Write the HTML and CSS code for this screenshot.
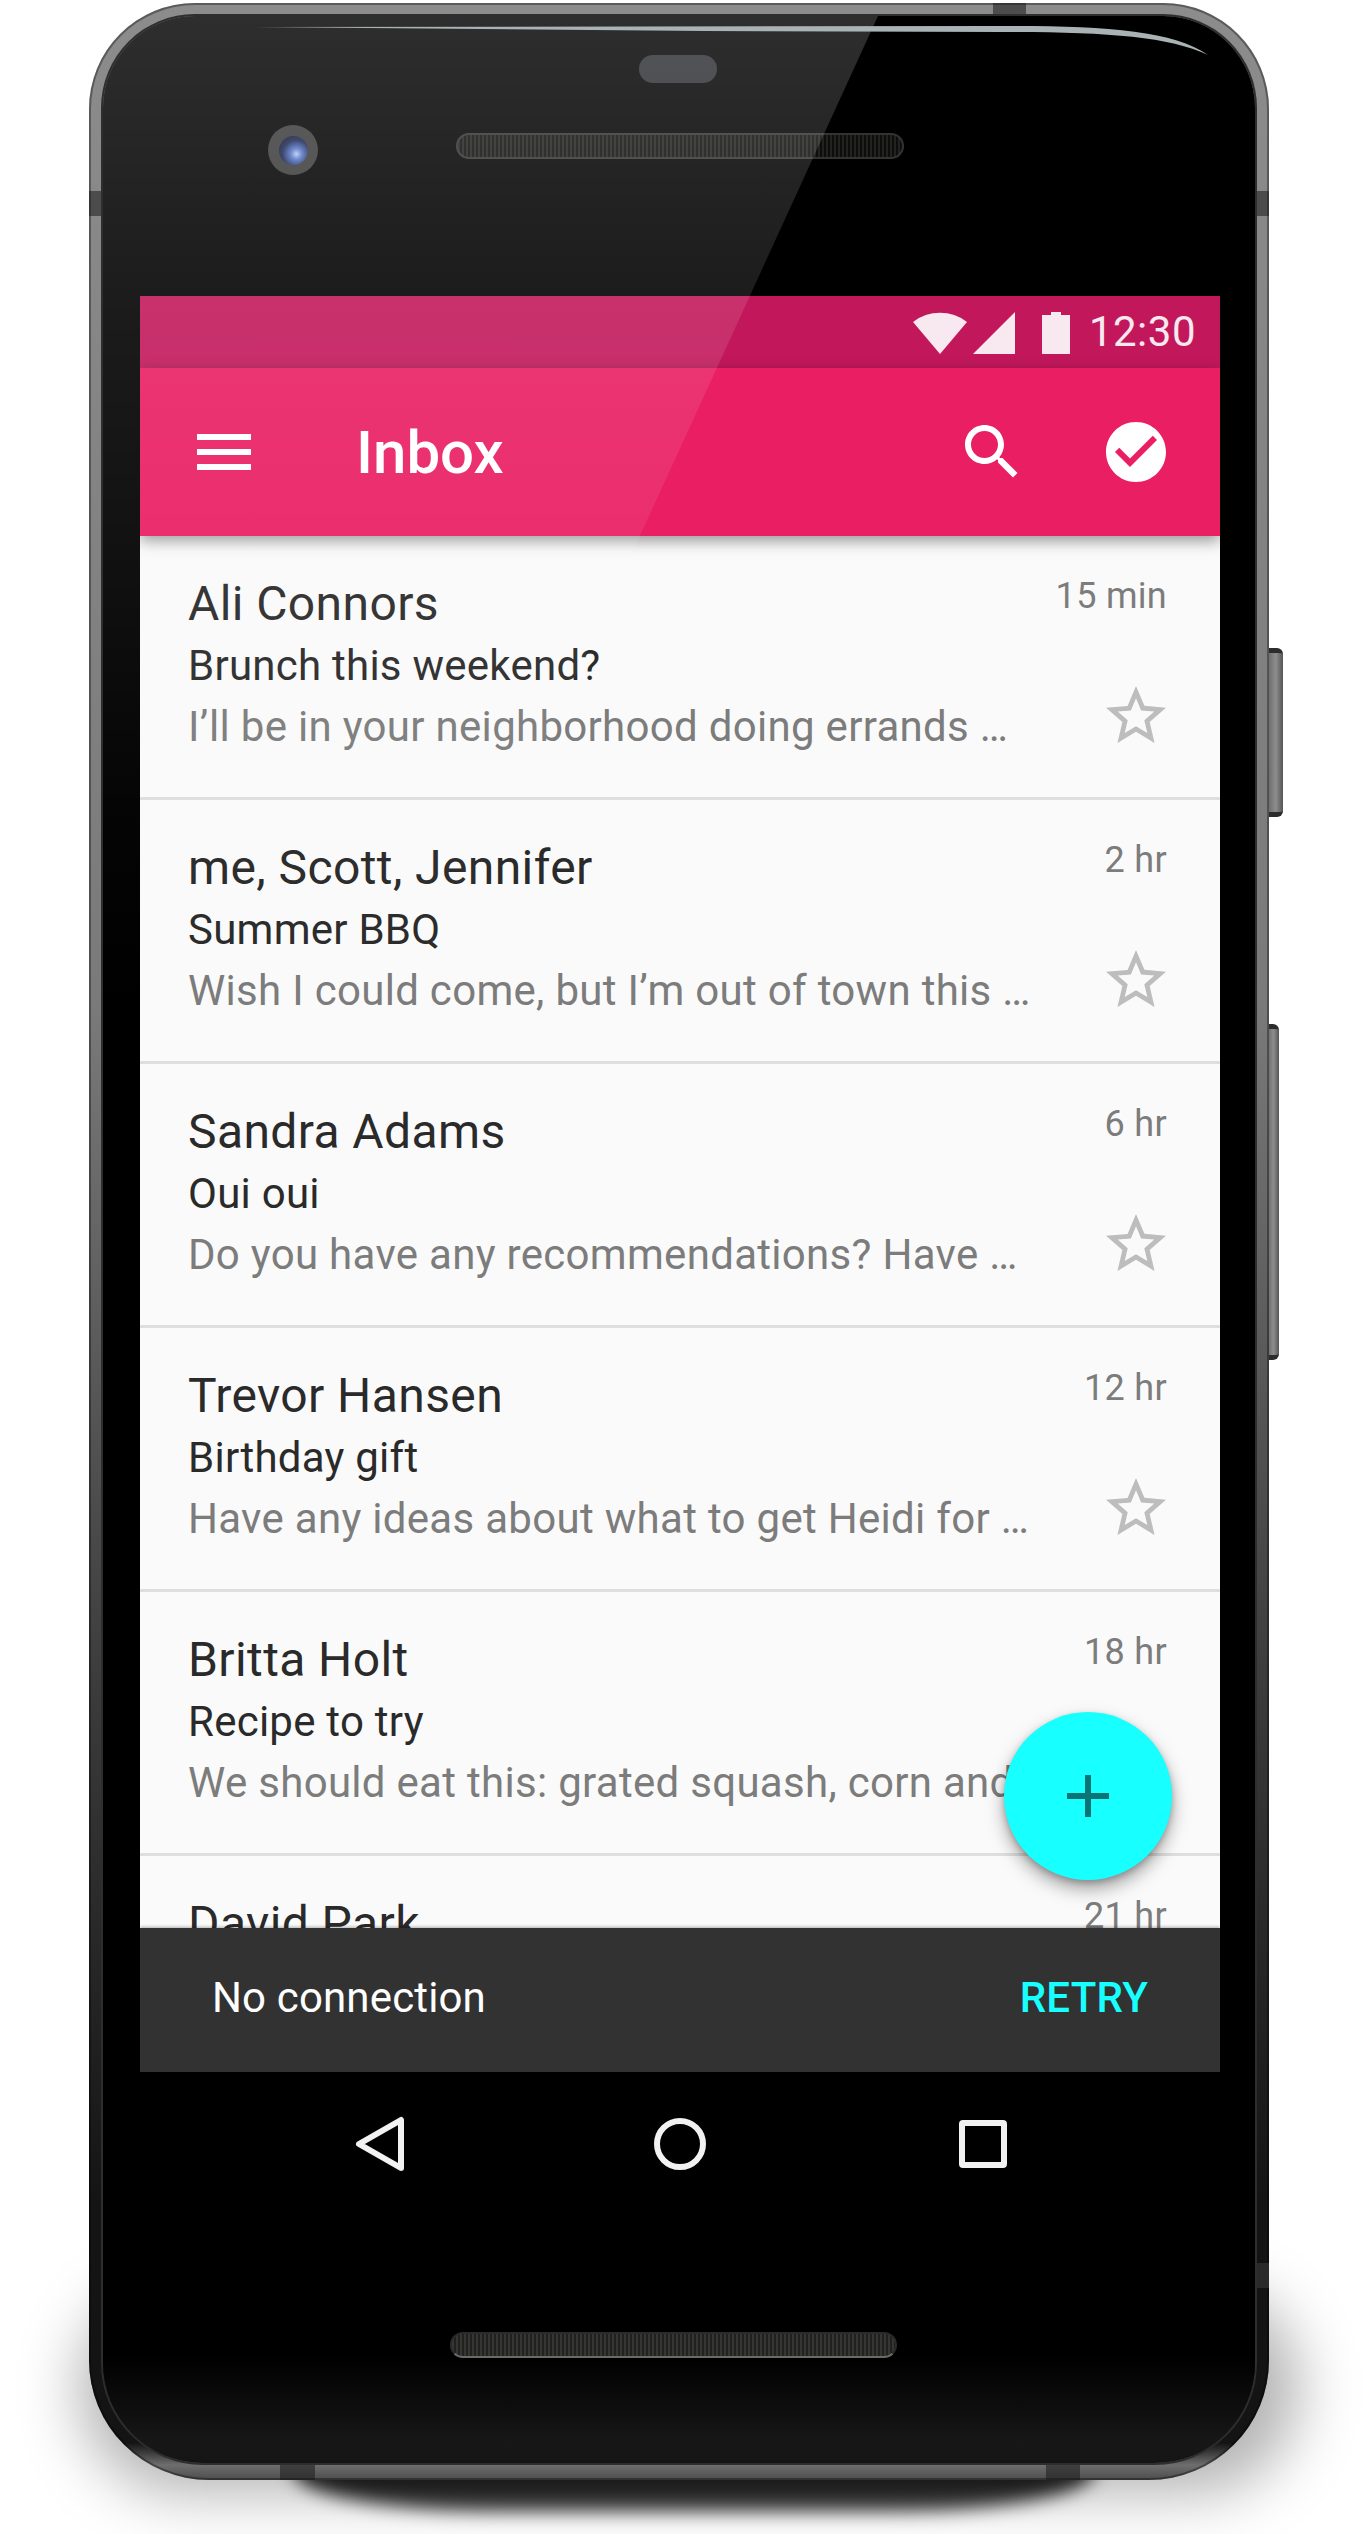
FILE: index.html
```html
<!DOCTYPE html>
<html lang="en">
<head>
  <meta charset="UTF-8">
  <meta name="viewport" content="width=device-width, initial-scale=1.0">
  <title>Inbox</title>
  <link rel="stylesheet" href="styles.css">
</head>
<body>
  <div class="device">
    <div class="floor-shadow"></div>
    <div class="floor-shadow-core"></div>
    <div class="side-btn power"></div>
    <div class="side-btn volume"></div>

    <div class="phone">
      <i class="notch notch-top"></i>
      <i class="notch notch-left"></i>
      <i class="notch notch-right"></i>
      <i class="notch notch-right-low"></i>
      <i class="notch notch-bottom-a"></i>
      <i class="notch notch-bottom-b"></i>

      <div class="bezel">
        <div class="bezel-top">
          <div class="sensor"></div>
          <div class="ear-row">
            <div class="camera"><div class="lens"></div></div>
            <div class="speaker"></div>
          </div>
        </div>

        <div class="screen">
          <div class="status-bar">
            <svg class="st-wifi" viewBox="0 0 54 42"><path d="M27 42L0 10A44 44 0 0 1 54 10Z"/></svg>
            <svg class="st-signal" viewBox="0 0 42 42"><path d="M42 0V42H0Z"/></svg>
            <svg class="st-battery" viewBox="0 0 28 42"><path d="M9 0H19V3H28V42H0V3H9Z"/></svg>
            <span class="st-time">12:30</span>
          </div>

          <div class="app-bar">
            <svg class="icon menu-icon" viewBox="0 0 24 24"><path d="M3 18h18v-2H3v2zm0-5h18v-2H3v2zm0-7v2h18V6H3z"/></svg>
            <div class="title">Inbox</div>
            <svg class="icon" viewBox="0 0 24 24"><path d="M15.5 14h-.79l-.28-.27C15.41 12.59 16 11.11 16 9.5 16 5.91 13.09 3 9.5 3S3 5.91 3 9.5 5.91 16 9.5 16c1.61 0 3.09-.59 4.23-1.57l.27.28v.79l5 4.99L20.49 19l-4.99-5zm-6 0C7.01 14 5 11.99 5 9.5S7.01 5 9.5 5 14 7.01 14 9.5 11.99 14 9.5 14z"/></svg>
            <svg class="icon check-icon" viewBox="0 0 24 24"><path d="M12 2C6.48 2 2 6.48 2 12s4.48 10 10 10 10-4.48 10-10S17.52 2 12 2zm-2 15l-5-5 1.41-1.41L10 14.17l7.59-7.59L19 8l-9 9z"/></svg>
          </div>

          <div class="list">
            <div class="row">
              <div class="row-text">
                <div class="name">Ali Connors</div>
                <div class="subject">Brunch this weekend?</div>
                <div class="preview">I’ll be in your neighborhood doing errands …</div>
              </div>
              <div class="row-side">
                <span class="time">15 min</span>
                <svg class="star" viewBox="0 0 24 24"><path d="M22 9.24l-7.19-.62L12 2 9.19 8.63 2 9.24l5.46 4.73L5.82 21 12 17.27 18.18 21l-1.63-7.03L22 9.24zM12 15.4l-3.76 2.27 1-4.28-3.32-2.88 4.38-.38L12 6.1l1.71 4.04 4.38.38-3.32 2.88 1 4.28L12 15.4z"/></svg>
              </div>
            </div>
            <div class="row">
              <div class="row-text">
                <div class="name">me, Scott, Jennifer</div>
                <div class="subject">Summer BBQ</div>
                <div class="preview">Wish I could come, but I’m out of town this …</div>
              </div>
              <div class="row-side">
                <span class="time">2 hr</span>
                <svg class="star" viewBox="0 0 24 24"><path d="M22 9.24l-7.19-.62L12 2 9.19 8.63 2 9.24l5.46 4.73L5.82 21 12 17.27 18.18 21l-1.63-7.03L22 9.24zM12 15.4l-3.76 2.27 1-4.28-3.32-2.88 4.38-.38L12 6.1l1.71 4.04 4.38.38-3.32 2.88 1 4.28L12 15.4z"/></svg>
              </div>
            </div>
            <div class="row">
              <div class="row-text">
                <div class="name">Sandra Adams</div>
                <div class="subject">Oui oui</div>
                <div class="preview">Do you have any recommendations? Have …</div>
              </div>
              <div class="row-side">
                <span class="time">6 hr</span>
                <svg class="star" viewBox="0 0 24 24"><path d="M22 9.24l-7.19-.62L12 2 9.19 8.63 2 9.24l5.46 4.73L5.82 21 12 17.27 18.18 21l-1.63-7.03L22 9.24zM12 15.4l-3.76 2.27 1-4.28-3.32-2.88 4.38-.38L12 6.1l1.71 4.04 4.38.38-3.32 2.88 1 4.28L12 15.4z"/></svg>
              </div>
            </div>
            <div class="row">
              <div class="row-text">
                <div class="name">Trevor Hansen</div>
                <div class="subject">Birthday gift</div>
                <div class="preview">Have any ideas about what to get Heidi for …</div>
              </div>
              <div class="row-side">
                <span class="time">12 hr</span>
                <svg class="star" viewBox="0 0 24 24"><path d="M22 9.24l-7.19-.62L12 2 9.19 8.63 2 9.24l5.46 4.73L5.82 21 12 17.27 18.18 21l-1.63-7.03L22 9.24zM12 15.4l-3.76 2.27 1-4.28-3.32-2.88 4.38-.38L12 6.1l1.71 4.04 4.38.38-3.32 2.88 1 4.28L12 15.4z"/></svg>
              </div>
            </div>
            <div class="row">
              <div class="row-text">
                <div class="name">Britta Holt</div>
                <div class="subject">Recipe to try</div>
                <div class="preview">We should eat this: grated squash, corn and …</div>
              </div>
              <div class="row-side">
                <span class="time">18 hr</span>
              </div>
            </div>
            <div class="row">
              <div class="row-text">
                <div class="name">David Park</div>
              </div>
              <div class="row-side">
                <span class="time">21 hr</span>
              </div>
            </div>
          </div>

          <div class="snackbar">
            <span class="snack-msg">No connection</span>
            <span class="snack-action">RETRY</span>
          </div>

          <div class="fab">
            <svg viewBox="0 0 24 24"><path d="M19 13h-6v6h-2v-6H5v-2h6V5h2v6h6v2z"/></svg>
          </div>
        </div>

        <div class="nav-bar">
          <svg viewBox="0 0 72 72"><path d="M57 12V60L15 36Z"/></svg>
          <svg viewBox="0 0 72 72"><circle cx="36" cy="36" r="23"/></svg>
          <svg viewBox="0 0 72 72"><rect x="18" y="15" width="42" height="42" rx="1"/></svg>
        </div>

        <div class="bezel-bottom">
          <div class="speaker speaker-low"></div>
        </div>

        <div class="glare"></div>
        <svg class="sheen" viewBox="0 0 1152 80"><path d="M144 11L900 10C1000 10 1070 14 1105 39C1065 20 1000 16 900 16L600 15Z"/></svg>
      </div>
    </div>
  </div>
</body>
</html>
```

FILE: styles.css
```css
html, body {
  margin: 0;
  padding: 0;
  height: 2534px;
  overflow: hidden;
  background: #fff;
}
body {
  font-family: Roboto, "Liberation Sans", sans-serif;
}
svg {
  display: block;
}

/* device hardware */
.device {
  position: relative;
  width: 1180px;
  height: 2477px;
  margin: 3px 0 0 89px;
}
.floor-shadow {
  position: absolute;
  left: -10px;
  right: -30px;
  top: 2280px;
  height: 210px;
  border-radius: 120px;
  background: rgba(0, 0, 0, 0.3);
  filter: blur(30px);
}
.floor-shadow-core {
  position: absolute;
  left: 205px;
  right: 175px;
  top: 2440px;
  height: 68px;
  border-radius: 0 0 200px 200px / 0 0 40px 40px;
  background: linear-gradient(180deg, #181818 55%, #3c3c3c 100%);
  filter: blur(9px);
}
.side-btn {
  position: absolute;
  background: linear-gradient(90deg, #666, #8d8d8d 55%, #555);
  border-radius: 0 6px 6px 0;
  border-top: 5px solid #2c2c2c;
  border-bottom: 5px solid #2c2c2c;
}
.power {
  left: 1178px;
  top: 645px;
  width: 16px;
  height: 159px;
}
.volume {
  left: 1178px;
  top: 1021px;
  width: 12px;
  height: 326px;
}
.phone {
  position: relative;
  box-sizing: border-box;
  width: 100%;
  height: 100%;
  padding: 13px 14px 17px 14px;
  border-radius: 106px 106px 120px 120px;
  background: linear-gradient(180deg, #8c8c8c 0, #7a7a7a 1000px, #3a3a3a 1700px, #141414 2200px, #141414 2440px, #6e6e6e 2462px, #4c4c4c 2477px);
  box-shadow: inset 0 0 0 2px rgba(0, 0, 0, 0.35);
}
.notch {
  position: absolute;
  background: rgba(25, 25, 25, 0.55);
}
.notch-top { left: 904px; top: 0; width: 33px; height: 13px; }
.notch-left { left: 0; top: 188px; width: 14px; height: 25px; }
.notch-right { right: 0; top: 188px; width: 14px; height: 25px; }
.notch-right-low { right: 0; top: 2260px; width: 14px; height: 25px; background: #2a2a2a; }
.notch-bottom-a { left: 191px; bottom: 0; width: 35px; height: 17px; }
.notch-bottom-b { left: 957px; bottom: 0; width: 34px; height: 17px; }

.bezel {
  position: relative;
  height: 100%;
  border-radius: 92px 92px 100px 100px;
  background: linear-gradient(180deg, #000 2340px, #171717 2425px, #151515 100%);
  box-shadow: 0 0 0 2px #2e2e2e;
  overflow: hidden;
}
.glare {
  position: absolute;
  z-index: 5;
  left: 0;
  top: 0;
  width: 775px;
  height: 1000px;
  clip-path: polygon(0 0, 775px 0, 317px 1000px, 0 1000px);
  background: linear-gradient(180deg, rgba(255, 255, 255, 0.18) 0, rgba(255, 255, 255, 0.11) 280px, rgba(255, 255, 255, 0.07) 520px, rgba(255, 255, 255, 0.02) 790px, rgba(255, 255, 255, 0) 1000px);
}
.sheen {
  position: absolute;
  z-index: 6;
  left: 0;
  top: 0;
  width: 1152px;
  height: 80px;
}
.sheen path {
  fill: #a9b3b6;
}

.bezel-top {
  height: 280px;
  padding-left: 37px;
  box-sizing: border-box;
  overflow: hidden;
}
.sensor {
  width: 78px;
  height: 28px;
  margin: 39px 0 0 499px;
  border-radius: 14px;
  background: #2e2f33;
}
.ear-row {
  display: flex;
  align-items: center;
  margin-top: 34px;
  padding-left: 128px;
}
.camera {
  display: flex;
  align-items: center;
  justify-content: center;
  width: 50px;
  height: 50px;
  margin-top: 8px;
  border-radius: 50%;
  background: #3b3b3b;
}
.lens {
  width: 29px;
  height: 29px;
  border-radius: 50%;
  background: radial-gradient(circle at 60% 62%, #b8c9f2 0, #5877c8 22%, #1d2a55 55%, #0a0d18 100%);
}
.speaker {
  box-sizing: border-box;
  width: 448px;
  height: 26px;
  margin-left: 138px;
  border: 2px solid #333;
  border-radius: 13px;
  background: repeating-linear-gradient(90deg, #222220 0 2px, #0d0d0c 2px 4px);
}

/* app screen */
.screen {
  position: relative;
  display: flex;
  flex-direction: column;
  width: 1080px;
  height: 1776px;
  margin-left: 37px;
  background: #fafafa;
}
.status-bar {
  display: flex;
  align-items: center;
  flex: none;
  height: 72px;
  padding-right: 24px;
  justify-content: flex-end;
  background: #c2185b;
}
.status-bar svg {
  fill: #f8e8ef;
  height: 42px;
  margin-top: 1px;
}
.st-wifi { width: 54px; }
.st-signal { width: 42px; margin-left: 6px; }
.st-battery { width: 28px; margin-left: 27px; }
.st-time {
  margin-left: 19px;
  color: #f8e8ef;
  font-size: 42px;
  line-height: 72px;
  letter-spacing: 0.5px;
}
.app-bar {
  position: relative;
  z-index: 2;
  display: flex;
  align-items: center;
  flex: none;
  height: 168px;
  padding: 0 48px;
  background: #e91e63;
  box-shadow: 0 5px 14px rgba(0, 0, 0, 0.4);
}
.icon {
  flex: none;
  width: 72px;
  height: 72px;
  fill: #fff;
}
.title {
  flex: 1;
  margin-left: 96px;
  color: #fff;
  font-size: 60px;
  font-weight: 500;
}
.check-icon {
  margin-left: 72px;
}
.list {
  flex: 1;
  min-height: 0;
  overflow: hidden;
}
.row {
  display: flex;
  justify-content: space-between;
  box-sizing: border-box;
  height: 264px;
  padding-left: 48px;
  padding-right: 48px;
  border-bottom: 3px solid #dedede;
}
.row-text {
  min-width: 0;
  padding-top: 40px;
  white-space: nowrap;
}
.name {
  color: #2a2a2a;
  font-size: 48px;
  line-height: 56px;
  letter-spacing: 0.4px;
}
.subject {
  margin-top: 7px;
  color: #2a2a2a;
  font-size: 42px;
  line-height: 54px;
  letter-spacing: 0.25px;
}
.preview {
  margin-top: 7px;
  color: #7c7c7c;
  font-size: 42px;
  line-height: 54px;
  letter-spacing: 0.3px;
}
.row-side {
  display: flex;
  flex-direction: column;
  align-items: flex-end;
  flex: none;
  width: 72px;
}
.time {
  margin-top: 36px;
  margin-right: 5px;
  color: #7c7c7c;
  font-size: 36px;
  line-height: 48px;
  letter-spacing: 0.3px;
  white-space: nowrap;
}
.star {
  flex: none;
  width: 72px;
  height: 72px;
  margin-top: 60px;
  fill: #bdbdbd;
}
.snackbar {
  position: relative;
  z-index: 2;
  display: flex;
  align-items: center;
  justify-content: space-between;
  flex: none;
  height: 144px;
  padding: 0 72px 6px;
  box-sizing: border-box;
  background: #323232;
  box-shadow: 0 -1px 3px rgba(0, 0, 0, 0.3);
  font-size: 42px;
}
.snack-msg {
  color: #fff;
  letter-spacing: 0.15px;
}
.snack-action {
  color: #18ffff;
  font-weight: 500;
  letter-spacing: 0.2px;
}
.fab {
  position: absolute;
  z-index: 3;
  right: 48px;
  bottom: 192px;
  display: flex;
  align-items: center;
  justify-content: center;
  width: 168px;
  height: 168px;
  border-radius: 50%;
  background: #18ffff;
  box-shadow: 0 9px 18px rgba(0, 0, 0, 0.35), 0 3px 6px rgba(0, 0, 0, 0.2);
}
.fab svg {
  width: 72px;
  height: 72px;
  fill: rgba(0, 0, 0, 0.54);
}

/* soft keys and chin */
.nav-bar {
  display: flex;
  align-items: center;
  gap: 228px;
  height: 144px;
  padding-left: 241px;
}
.nav-bar svg {
  width: 72px;
  height: 72px;
  fill: none;
  stroke: #f2f2f2;
  stroke-width: 6;
  stroke-linejoin: round;
}
.bezel-bottom {
  padding-top: 116px;
}
.speaker-low {
  width: 447px;
  margin-left: 347px;
  background: repeating-linear-gradient(90deg, #363633 0 2px, #212120 2px 4px);
  border-color: #2b2b2b;
  border-bottom-color: #6a6a66;
}
```
